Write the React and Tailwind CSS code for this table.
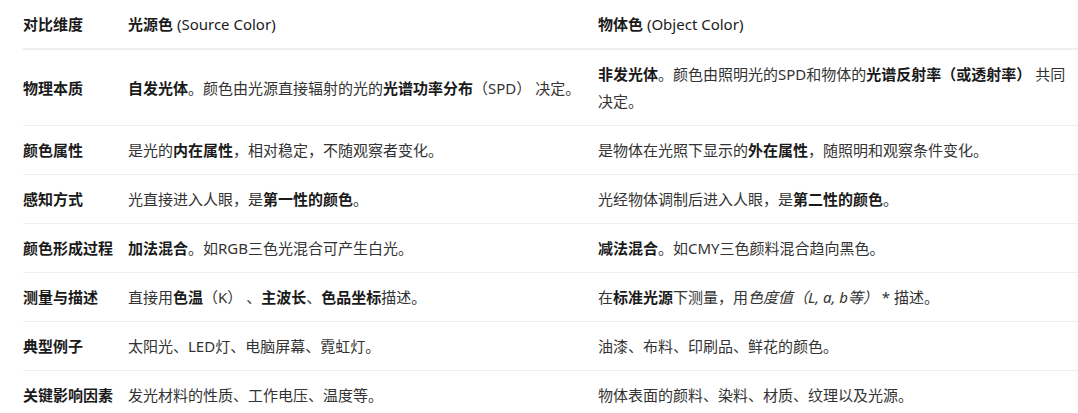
import React from "react";

const B = ({ children }) => <b className="font-bold text-[#1a1a1a]">{children}</b>;

const rows = [
  {
    k: "物理本质",
    a: (
      <>
        <B>自发光体</B>。颜色由光源直接辐射的光的<B>光谱功率分布</B>（SPD） 决定。
      </>
    ),
    b: (
      <>
        <B>非发光体</B>。颜色由照明光的SPD和物体的<B>光谱反射率（或透射率）</B> 共同决定。
      </>
    ),
  },
  {
    k: "颜色属性",
    a: (
      <>
        是光的<B>内在属性</B>，相对稳定，不随观察者变化。
      </>
    ),
    b: (
      <>
        是物体在光照下显示的<B>外在属性</B>，随照明和观察条件变化。
      </>
    ),
  },
  {
    k: "感知方式",
    a: (
      <>
        光直接进入人眼，是<B>第一性的颜色</B>。
      </>
    ),
    b: (
      <>
        光经物体调制后进入人眼，是<B>第二性的颜色</B>。
      </>
    ),
  },
  {
    k: "颜色形成过程",
    a: (
      <>
        <B>加法混合</B>。如RGB三色光混合可产生白光。
      </>
    ),
    b: (
      <>
        <B>减法混合</B>。如CMY三色颜料混合趋向黑色。
      </>
    ),
  },
  {
    k: "测量与描述",
    a: (
      <>
        直接用<B>色温</B>（K） 、<B>主波长</B>、<B>色品坐标</B>描述。
      </>
    ),
    b: (
      <>
        在<B>标准光源</B>下测量，用<i className="italic">色度值（L, a, b等）</i> * 描述。
      </>
    ),
  },
  {
    k: "典型例子",
    a: <>太阳光、LED灯、电脑屏幕、霓虹灯。</>,
    b: <>油漆、布料、印刷品、鲜花的颜色。</>,
  },
  {
    k: "关键影响因素",
    a: <>发光材料的性质、工作电压、温度等。</>,
    b: <>物体表面的颜料、染料、材质、纹理以及光源。</>,
  },
];

export default function App() {
  return (
    <div
      className="bg-white w-[1078px] h-[413px] overflow-hidden text-[15px] leading-[27px] text-[#333333]"
      style={{ fontFamily: '"Noto Sans", "Noto Sans CJK SC", sans-serif' }}
    >
      <div className="ml-[23px]">
        <div className="grid grid-cols-[105px_470px_1fr] border-b-2 border-[#efefef] pt-[11px] pb-[10px] font-bold text-[#1a1a1a]">
          <div>对比维度</div>
          <div>光源色 <span className="font-normal">(Source Color)</span></div>
          <div>物体色 <span className="font-normal">(Object Color)</span></div>
        </div>
        {rows.map((r) => (
          <div
            key={r.k}
            className="grid grid-cols-[105px_470px_1fr] items-center border-b border-[#efefef] pt-[11px] pb-[10px]"
          >
            <div className="font-bold text-[#1a1a1a]">{r.k}</div>
            <div className="pr-[10px]">{r.a}</div>
            <div className="pr-[6px]">{r.b}</div>
          </div>
        ))}
      </div>
    </div>
  );
}
